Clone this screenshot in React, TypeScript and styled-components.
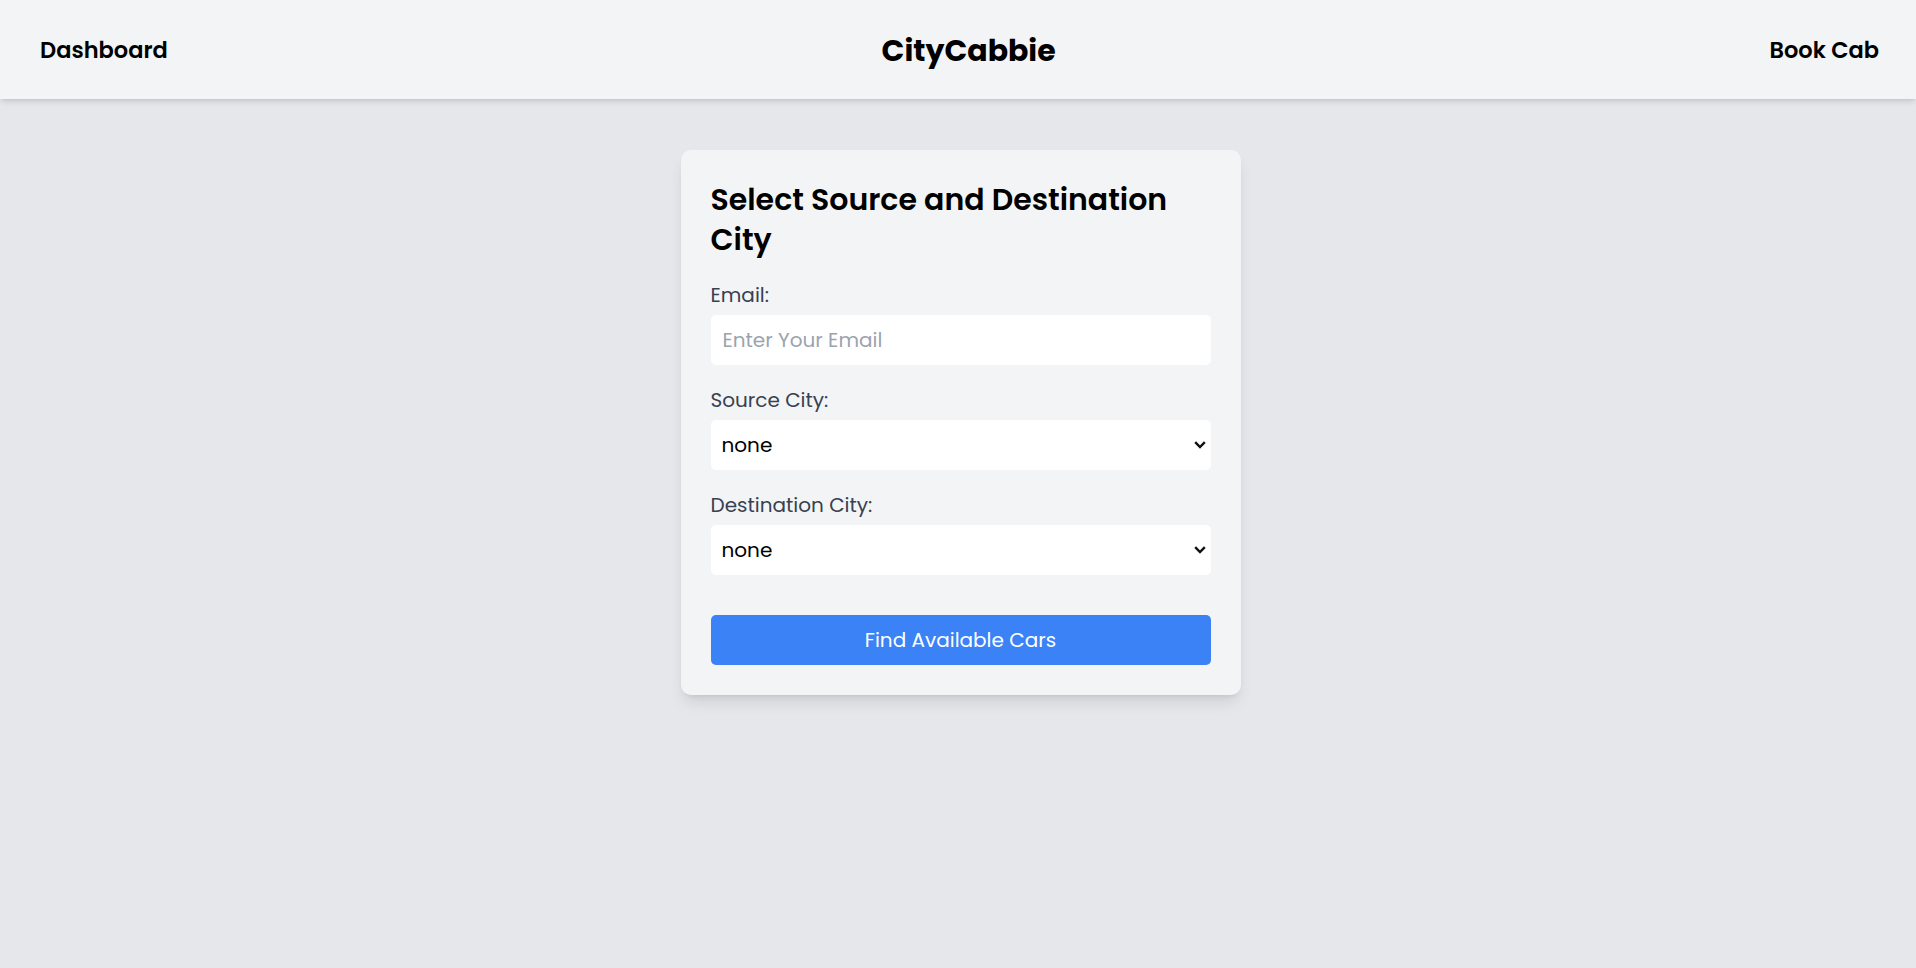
import styled, { createGlobalStyle } from 'styled-components'

const GlobalStyle = createGlobalStyle`
  * {
    box-sizing: border-box;
  }
  body {
    margin: 0;
    background: #e5e7eb;
    font-family: 'Poppins', 'Open Sans', sans-serif;
    color: #000;
  }
`

const cities = ['none', 'Mumbai', 'Delhi', 'Bangalore', 'Pune', 'Chennai']

const Chevron = () => (
  <ChevronIcon width="12" height="8" viewBox="0 0 12 8" aria-hidden="true">
    <path d="M1.2 1.2 L6 6 L10.8 1.2" fill="none" stroke="#111" strokeWidth="2.4" />
  </ChevronIcon>
)

const CitySelect = ({ id }: { id: string }) => (
  <SelectWrap>
    <Select id={id} defaultValue="none">
      {cities.map((c) => (
        <option key={c} value={c}>
          {c}
        </option>
      ))}
    </Select>
    <Chevron />
  </SelectWrap>
)

const App = () => {
  return (
    <Page>
      <GlobalStyle />
      <Navbar>
        <NavLink href="#">Dashboard</NavLink>
        <Brand>CityCabbie</Brand>
        <NavLink href="#">Book Cab</NavLink>
      </Navbar>
      <Main>
        <Card onSubmit={(e) => e.preventDefault()}>
          <Title>Select Source and Destination City</Title>
          <Field>
            <Label htmlFor="email">Email:</Label>
            <Input id="email" type="email" placeholder="Enter Your Email" />
          </Field>
          <Field>
            <Label htmlFor="source">Source City:</Label>
            <CitySelect id="source" />
          </Field>
          <Field>
            <Label htmlFor="destination">Destination City:</Label>
            <CitySelect id="destination" />
          </Field>
          <SubmitButton type="submit">Find Available Cars</SubmitButton>
        </Card>
      </Main>
    </Page>
  )
}

const Page = styled.div`
  min-height: 100vh;
  background: #e5e7eb;
`
const Navbar = styled.nav`
  height: 99px;
  display: flex;
  justify-content: space-between;
  align-items: center;
  padding: 2px 37px 0 40px;
  background: #f3f4f6;
  box-shadow: 0 4px 6px -1px rgba(0, 0, 0, 0.1), 0 2px 4px -2px rgba(0, 0, 0, 0.1);
`
const NavLink = styled.a`
  font-size: 22.5px;
  line-height: 35px;
  font-weight: 600;
  color: #000;
  text-decoration: none;
`
const Brand = styled.h1`
  margin: 0;
  font-size: 30px;
  line-height: 40px;
  font-weight: 700;
`
const Main = styled.main`
  display: flex;
  justify-content: center;
  padding: 51px 0 0 5px;
`
const Card = styled.form`
  width: 560px;
  padding: 30px;
  background: #f3f4f6;
  border-radius: 10px;
  box-shadow: 0 10px 15px -3px rgba(0, 0, 0, 0.1), 0 4px 6px -4px rgba(0, 0, 0, 0.1);
`
const Title = styled.h2`
  margin: 0 0 20px;
  font-size: 30px;
  line-height: 40px;
  font-weight: 600;
`
const Field = styled.div`
  display: flex;
  flex-direction: column;
  gap: 5px;
  margin-bottom: 20px;
`
const Label = styled.label`
  font-size: 20px;
  line-height: 30px;
  color: #374151;
`
const Input = styled.input`
  height: 50px;
  padding: 0 12px;
  border: none;
  border-radius: 5px;
  background: #fff;
  font-family: inherit;
  font-size: 20px;
  color: #000;
  outline: none;

  &::placeholder {
    color: #9ca3af;
  }
`
const SelectWrap = styled.div`
  position: relative;
  display: flex;
`
const Select = styled.select`
  flex: 1;
  height: 50px;
  padding: 0 30px 0 11px;
  border: none;
  border-radius: 5px;
  background: #fff;
  appearance: none;
  font-family: inherit;
  font-size: 20px;
  color: #000;
  outline: none;
`
const ChevronIcon = styled.svg`
  position: absolute;
  right: 5px;
  top: 21px;
  pointer-events: none;
`
const SubmitButton = styled.button`
  display: block;
  width: 100%;
  height: 50px;
  margin-top: 40px;
  border: none;
  border-radius: 5px;
  background: #3b82f6;
  color: #fff;
  font-family: inherit;
  font-size: 20px;
  cursor: pointer;
`

export default App
